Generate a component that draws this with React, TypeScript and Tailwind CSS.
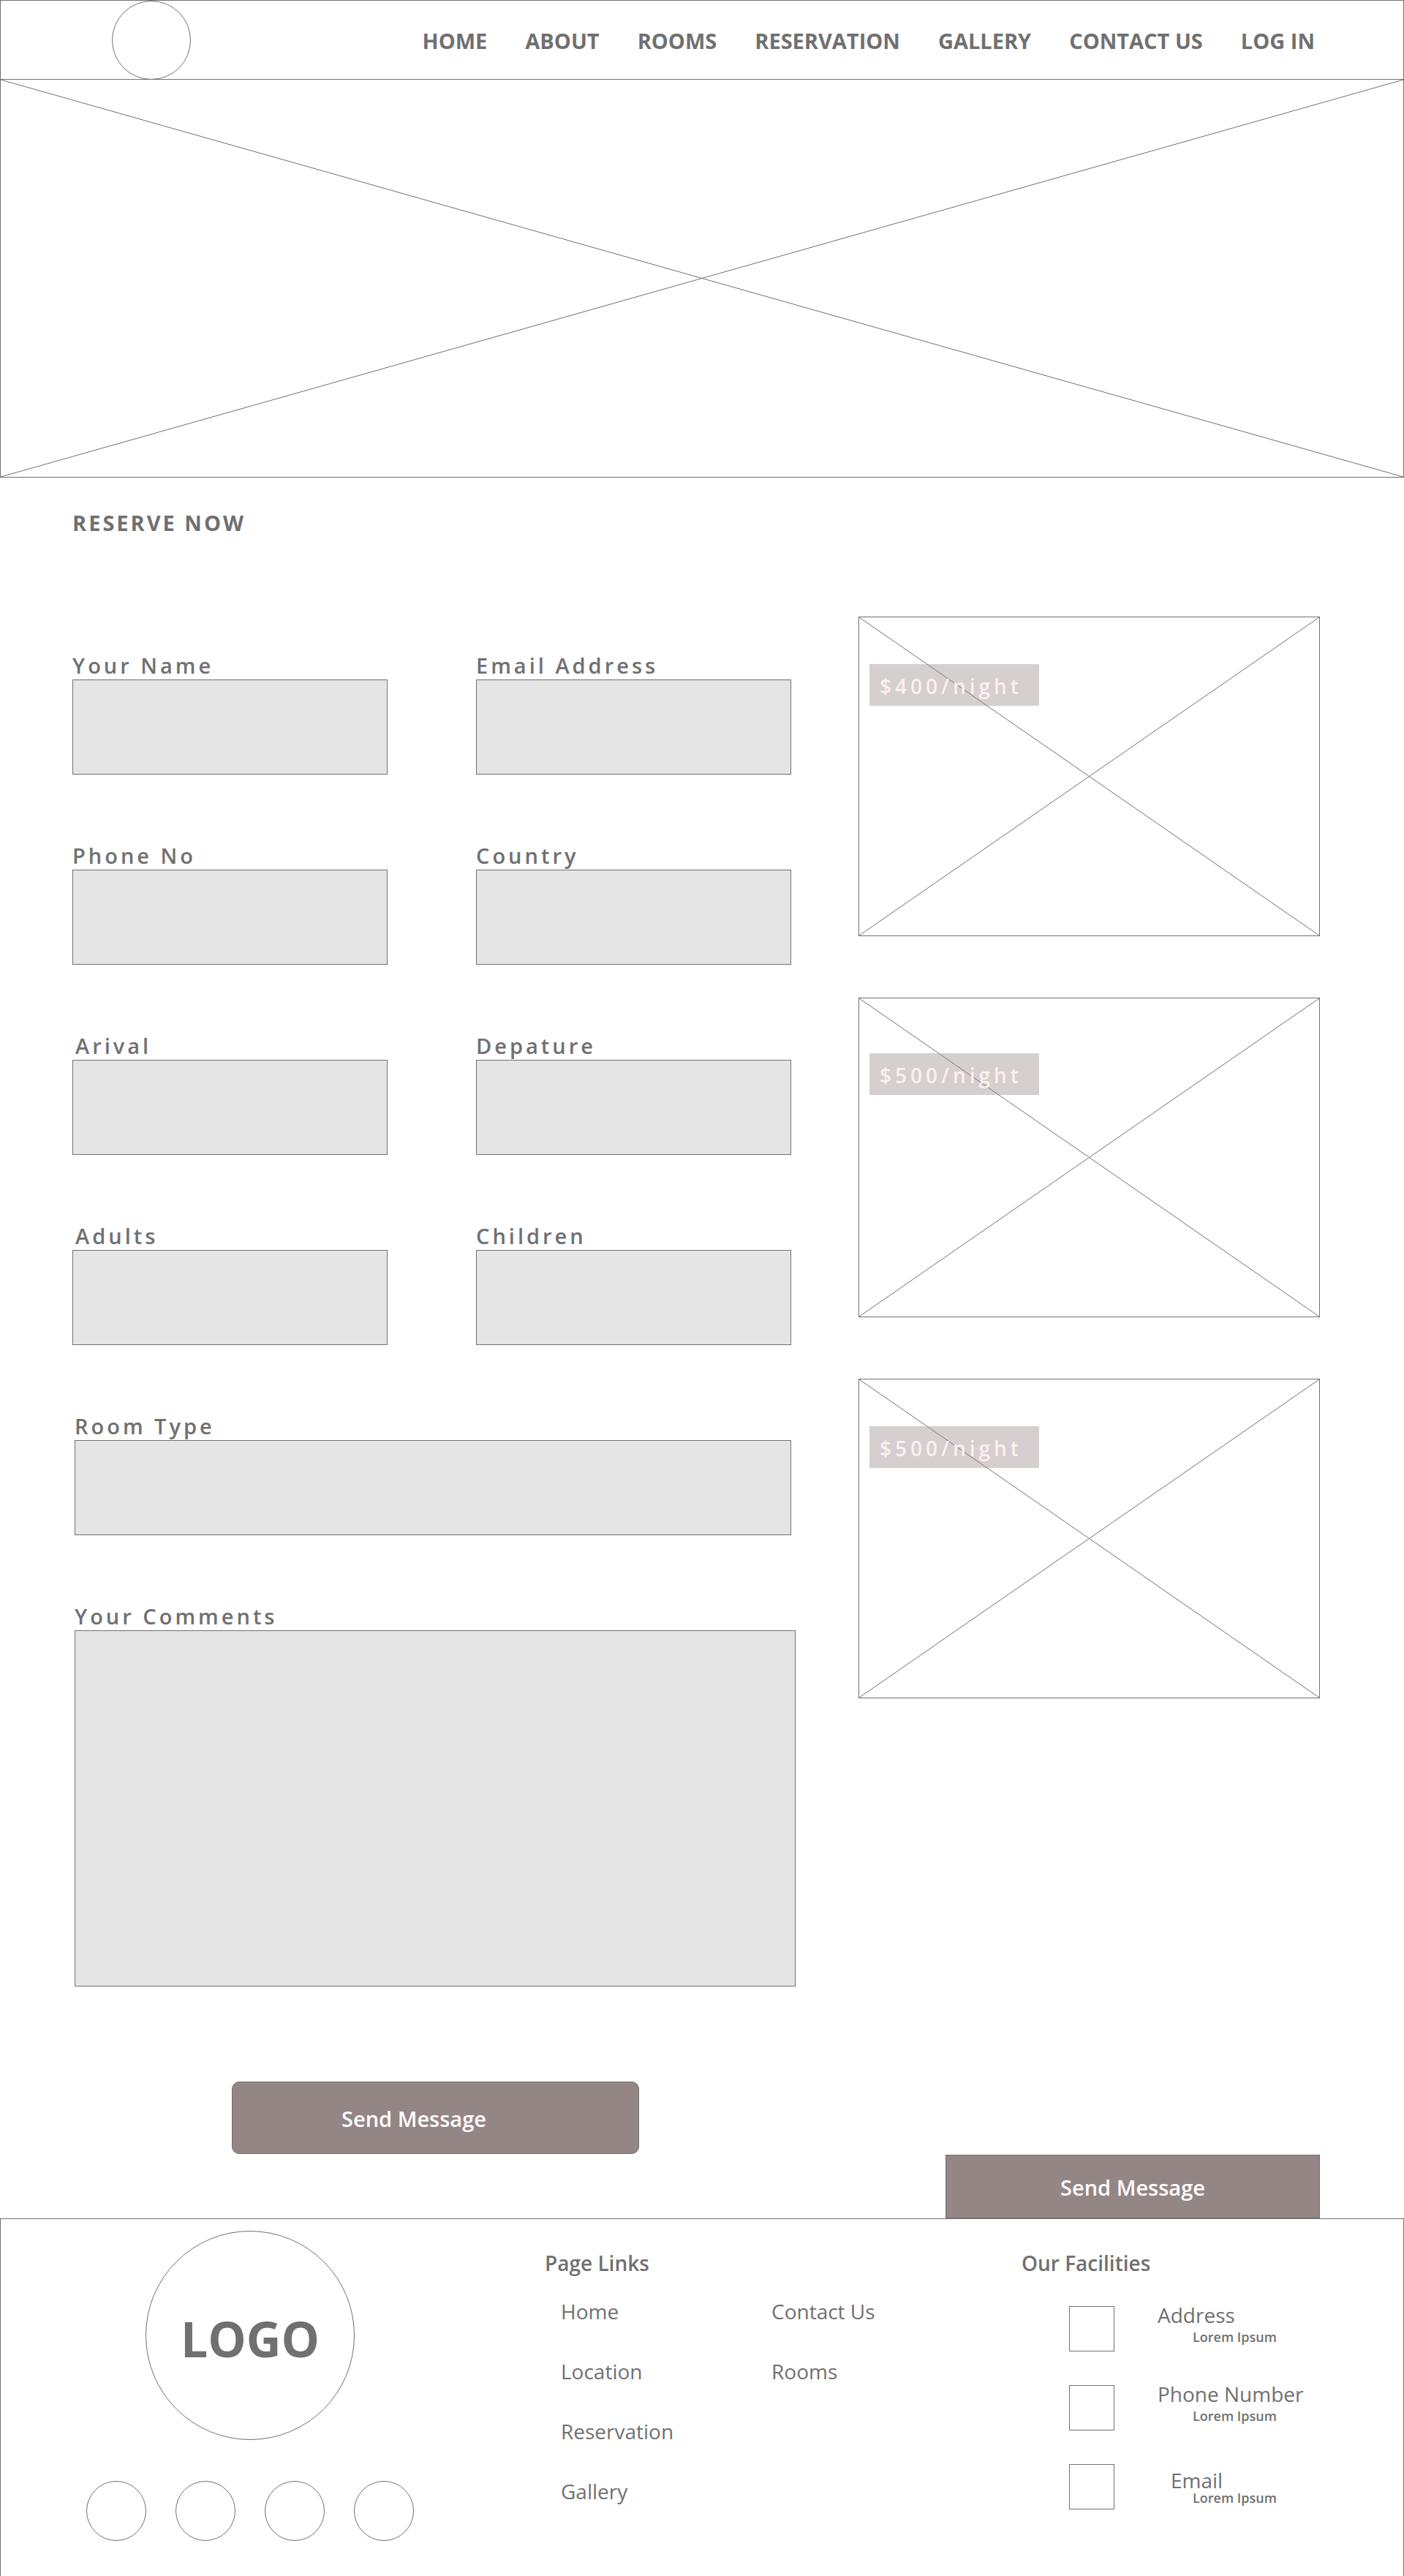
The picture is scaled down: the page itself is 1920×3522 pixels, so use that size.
import React from "react";

const NAV = ["HOME", "ABOUT", "ROOMS", "RESERVATION", "GALLERY", "CONTACT US", "LOG IN"];

const FIELDS = [
  { id: "name", label: "Your Name", type: "text", indent: false },
  { id: "email", label: "Email Address", type: "email", indent: false },
  { id: "phone", label: "Phone No", type: "tel", indent: false },
  { id: "country", label: "Country", type: "text", indent: false },
  { id: "arrival", label: "Arival", type: "text", indent: true },
  { id: "departure", label: "Depature", type: "text", indent: false },
  { id: "adults", label: "Adults", type: "text", indent: true },
  { id: "children", label: "Children", type: "text", indent: false },
];

const ROOMS = [
  { price: "$400/night", top: "pt-16" },
  { price: "$500/night", top: "pt-[75px]" },
  { price: "$500/night", top: "pt-16" },
];

const LINKS = [
  ["Home", "Location", "Reservation", "Gallery"],
  ["Contact Us", "Rooms"],
];

const FACILITIES = [
  { name: "Address", body: "gap-1.5", title: "" },
  { name: "Phone Number", body: "gap-1.5", title: "" },
  { name: "Email", body: "pt-2.5", title: "ml-[18px]" },
];

const LABEL = "block text-[29px] leading-[38px] font-semibold tracking-[4px]";
const BOX = "block w-full border border-[#707070] bg-[#e5e5e5] px-4 text-[28px] outline-none rounded-none";

function Cross() {
  return (
    <svg className="absolute inset-0 h-full w-full" aria-hidden="true">
      <line x1="0" y1="0" x2="100%" y2="100%" stroke="#707070" strokeWidth="1" />
      <line x1="0" y1="100%" x2="100%" y2="0" stroke="#707070" strokeWidth="1" />
    </svg>
  );
}

function Header() {
  return (
    <header className="flex h-[108px] items-center justify-between border-x border-t border-[#707070] pl-[152px] pr-[121px]">
      <a href="#home" aria-label="Home" className="block size-[108px] shrink-0 rounded-full border border-[#707070]" />
      <nav className="flex gap-[52px] pt-0.5">
        {NAV.map((item) => (
          <a key={item} href={"#" + item.toLowerCase().replace(" ", "-")} className="text-[29px] leading-10 font-bold whitespace-nowrap">
            {item}
          </a>
        ))}
      </nav>
    </header>
  );
}

function ReservationForm() {
  return (
    <form className="pt-12 pb-[88px]" onSubmit={(e) => e.preventDefault()}>
      <div className="grid grid-cols-2 gap-x-[121px] gap-y-[92px] pr-1.5">
        {FIELDS.map((f) => (
          <div key={f.id}>
            <label htmlFor={f.id} className={LABEL + (f.indent ? " pl-1" : "")}>
              {f.label}
            </label>
            <input id={f.id} type={f.type} className={BOX + " h-[130px]"} />
          </div>
        ))}
      </div>
      <div className="mt-[92px] pl-[3px]">
        <div className="pr-1.5">
          <label htmlFor="room" className={LABEL}>
            Room Type
          </label>
          <input id="room" type="text" className={BOX + " h-[130px]"} />
        </div>
        <label htmlFor="comments" className={LABEL + " mt-[92px]"}>
          Your Comments
        </label>
        <textarea id="comments" className={BOX + " h-[487px] resize-none"} />
        <button
          type="submit"
          className="mx-auto mt-[130px] block h-[99px] w-[557px] rounded-[10px] border border-[#707070] bg-[#958686] pt-0.5 pr-[58px] text-[29px] font-semibold text-white"
        >
          Send Message
        </button>
      </div>
    </form>
  );
}

function Rooms() {
  return (
    <aside className="flex flex-col justify-between">
      <div className="flex flex-col gap-[84px]">
        {ROOMS.map((room, i) => (
          <article key={i} className={"relative h-[437px] border border-[#707070] pl-3.5 " + room.top}>
            <Cross />
            <p className="relative h-[57px] w-[232px] bg-[#958686]/40 pt-0.5 pl-3.5 text-[28px] leading-[57px] font-semibold tracking-[5px] whitespace-nowrap text-[#ffeeee]">
              {room.price}
            </p>
          </article>
        ))}
      </div>
      <button type="button" className="h-[87px] w-[512px] self-end border border-[#707070] bg-[#958686] pt-0.5 text-[29px] font-semibold text-white">
        Send Message
      </button>
    </aside>
  );
}

function Footer() {
  return (
    <footer className="grid grid-cols-[627fr_652fr_408fr] border-x border-t border-[#707070] pr-[114px] pb-12 pl-[117px]">
      <div className="flex w-[448px] flex-col items-center pt-4">
        <div className="flex size-[286px] items-center justify-center rounded-full border border-[#707070] pt-2 text-[66px] font-bold">
          LOGO
        </div>
        <ul className="mt-14 flex gap-10">
          {["Facebook", "Instagram", "Twitter", "YouTube"].map((name) => (
            <li key={name}>
              <a href={"#" + name.toLowerCase()} aria-label={name} className="block size-[82px] rounded-full border border-[#707070]" />
            </li>
          ))}
        </ul>
      </div>
      <section className="pt-10">
        <h2 className="text-[28px] leading-10 font-semibold">Page Links</h2>
        <div className="mt-[26px] flex pl-[22px]">
          {LINKS.map((column, i) => (
            <ul key={i} className="flex w-[288px] flex-col gap-[42px]">
              {column.map((link) => (
                <li key={link} className="text-[28px] leading-10">
                  <a href={"#" + link.toLowerCase().replace(" ", "-")}>{link}</a>
                </li>
              ))}
            </ul>
          ))}
        </div>
      </section>
      <section className="pt-10">
        <h2 className="text-[28px] leading-10 font-semibold">Our Facilities</h2>
        <ul className="mt-[39px] flex flex-col gap-[46px] pl-[65px]">
          {FACILITIES.map((f) => (
            <li key={f.name} className="flex h-[62px] gap-[59px]">
              <span className="size-[62px] shrink-0 border border-[#707070]" />
              <div className={"flex flex-col whitespace-nowrap " + f.body}>
                <h3 className={"text-[28px] leading-6 " + f.title}>{f.name}</h3>
                <p className="ml-12 text-[18px] leading-6 font-semibold">Lorem Ipsum</p>
              </div>
            </li>
          ))}
        </ul>
      </section>
    </footer>
  );
}

export default function App() {
  return (
    <div className="bg-white font-['Open_Sans','Noto_Sans',sans-serif] text-[#707070]">
      <Header />
      <div className="relative h-[545px] border border-[#707070]">
        <Cross />
      </div>
      <main className="pt-[42px] pr-[115px] pl-[99px]">
        <h1 className="text-[29px] leading-10 font-bold tracking-[3px]">RESERVE NOW</h1>
        <div className="mt-[108px] grid grid-cols-[989fr_631fr] gap-x-[86px]">
          <ReservationForm />
          <Rooms />
        </div>
      </main>
      <Footer />
    </div>
  );
}
